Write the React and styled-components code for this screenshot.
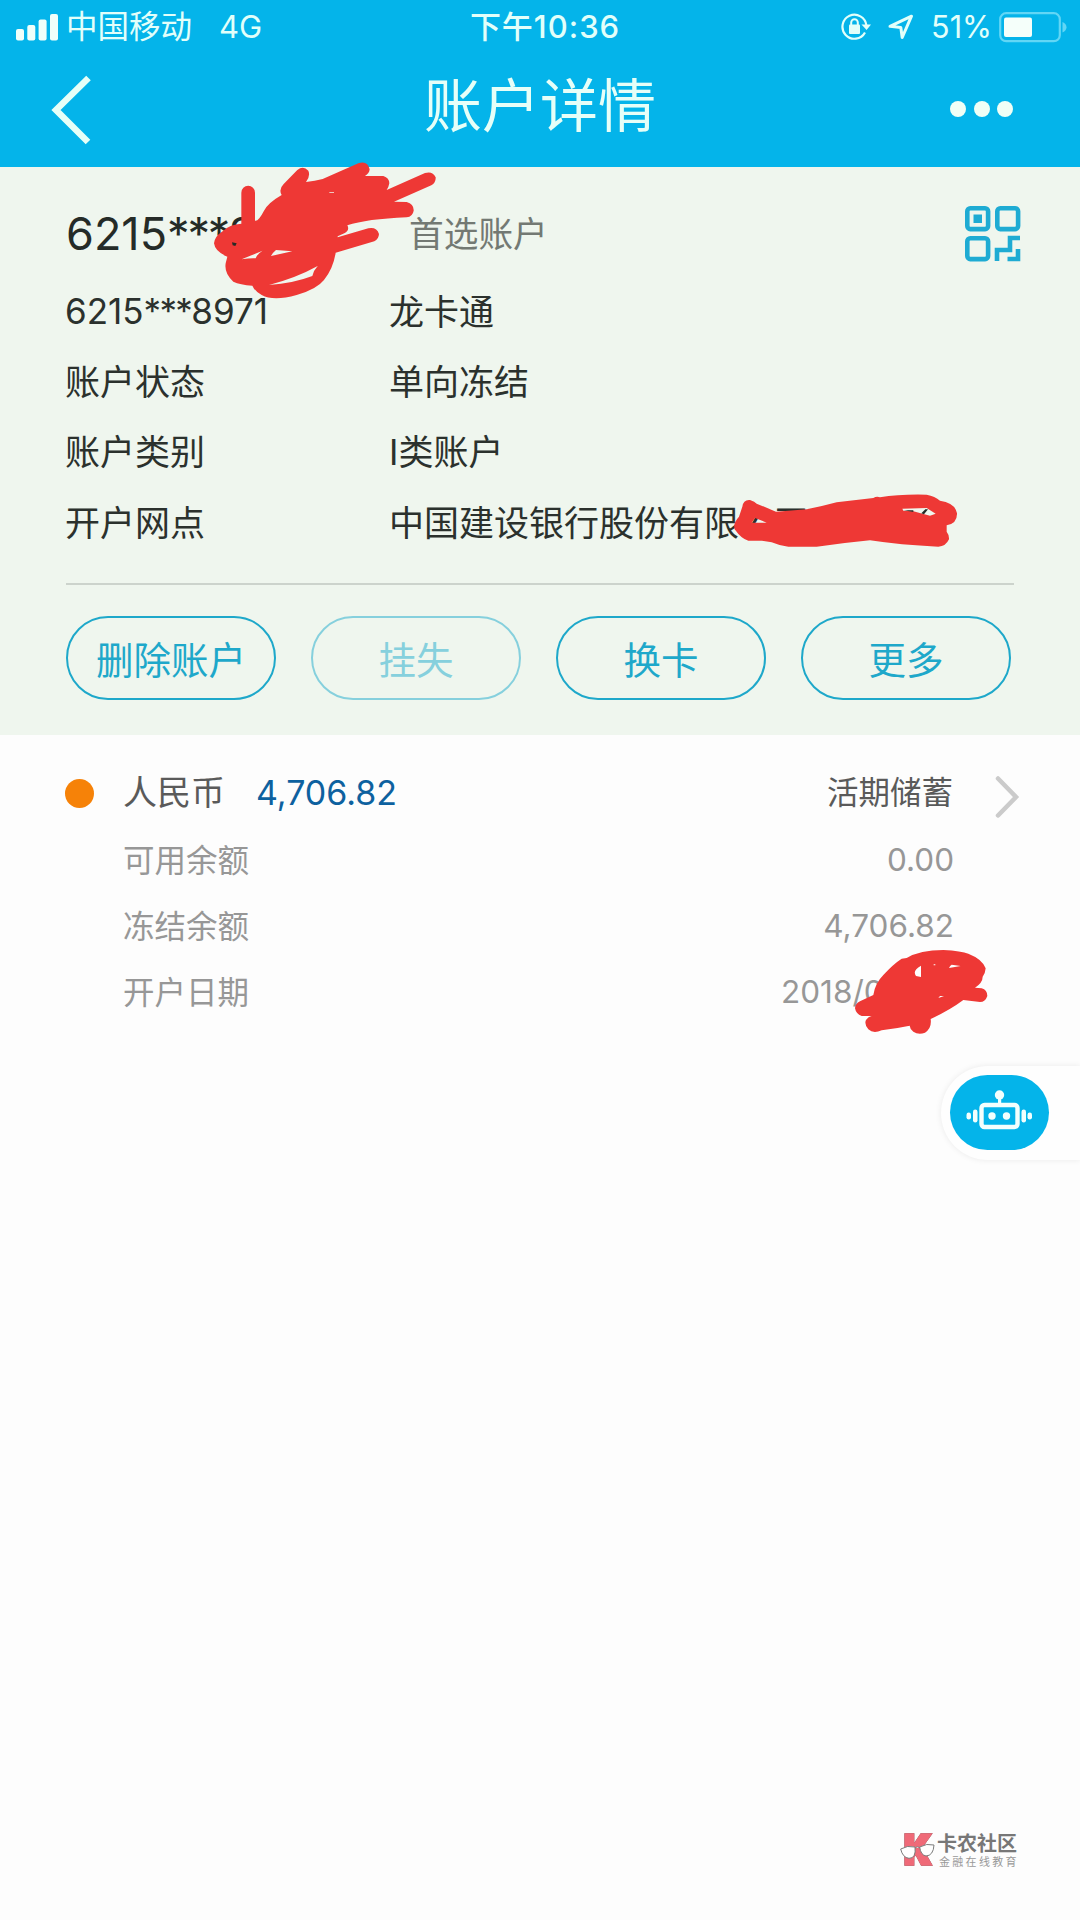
import React from 'react'
import styled, { createGlobalStyle } from 'styled-components'

const details = [
  { label: '6215***8971', value: '龙卡通', card: true },
  { label: '账户状态', value: '单向冻结' },
  { label: '账户类别', value: 'I类账户' },
  { label: '开户网点', value: '中国建设银行股份有限公司' },
]

const actions = [
  { text: '删除账户' },
  { text: '挂失', disabled: true },
  { text: '换卡' },
  { text: '更多' },
]

const balances = [
  { label: '可用余额', value: '0.00' },
  { label: '冻结余额', value: '4,706.82' },
  { label: '开户日期', value: '2018/0', date: true },
]

const SignalIcon = () => (
  <svg width='42' height='27' viewBox='0 0 42 27' fill='#f0fffa'>
    <rect x='0' y='15' width='8' height='11.5' rx='2' />
    <rect x='11.3' y='11' width='8' height='15.5' rx='2' />
    <rect x='22.6' y='5.5' width='8' height='21' rx='2' />
    <rect x='34' y='0' width='8' height='26.5' rx='2' />
  </svg>
)

const RotationLock = () => (
  <svg width='30' height='28' viewBox='0 0 30 28' fill='none' stroke='#e2fffa'>
    <path d='M25.4 12.5A12 12 0 1 0 24 19.5' strokeWidth='2.2' />
    <path d='M20.5 11.5H30L25.6 17Z' fill='#e2fffa' stroke='none' />
    <rect x='8' y='11.5' width='11' height='9.5' rx='1' fill='#e2fffa' stroke='none' />
    <path d='M10.2 12.5V9.5a3.3 3.3 0 0 1 6.6 0V12.5' strokeWidth='2' />
  </svg>
)

const LocationArrow = () => (
  <svg width='26' height='26' viewBox='0 0 26 26' fill='none'>
    <path
      d='M2 12.3L23.5 2.2L14.2 23.5L12.8 13.4Z'
      stroke='#e2fffa'
      strokeWidth='3'
      strokeLinejoin='round'
    />
  </svg>
)

const Battery = () => (
  <svg width='69' height='31' viewBox='0 0 69 31'>
    <rect x='1.2' y='1.2' width='59.6' height='28' rx='6' fill='none' stroke='#62d6f5' strokeWidth='2.2' />
    <rect x='5' y='5.5' width='28' height='19.5' rx='2' fill='#f5fffa' />
    <path d='M63.5 10Q67.5 12 67.5 15.3T63.5 20.5Z' fill='#62d6f5' />
  </svg>
)

const QrIcon = () => (
  <svg width='56' height='56' viewBox='0 0 56 56' fill='none' stroke='#1eabd3' strokeWidth='4.6'>
    <rect x='2.3' y='2.3' width='20.8' height='20.8' rx='3' />
    <rect x='32.3' y='2.3' width='20.8' height='20.8' rx='3' />
    <rect x='2.3' y='32.3' width='20.8' height='20.8' rx='3' />
    <rect x='8.5' y='8.5' width='8.5' height='8.5' fill='#1eabd3' stroke='none' />
    <path d='M55 32H45V44H32V55M53 43V53H42.5' />
  </svg>
)

const Robot = () => (
  <svg width='67' height='40' viewBox='0 0 67 40' fill='#f3fffd'>
    <circle cx='33.5' cy='5' r='4.7' />
    <rect x='32' y='8' width='3.2' height='8' />
    <rect x='15.5' y='15' width='36' height='22' rx='3' fill='none' stroke='#f3fffd' strokeWidth='4.4' />
    <circle cx='26' cy='26' r='3.7' />
    <circle cx='40.5' cy='26' r='3.7' />
    <rect x='7' y='19.5' width='4.5' height='13' rx='2.2' />
    <rect x='55.5' y='19.5' width='4.5' height='13' rx='2.2' />
    <rect x='0.5' y='22.5' width='4.5' height='7' rx='2.2' />
    <rect x='61.5' y='22.5' width='4.5' height='7' rx='2.2' />
  </svg>
)

const App = () => {
  return (
    <>
      <GlobalStyle />
      <Page>
        <Header>
          <StatusBar>
            <Carrier>
              <SignalIcon />
              <span>中国移动</span>
              <span className='network'>4G</span>
            </Carrier>
            <Time>下午10:36</Time>
            <StatusIcons>
              <RotationLock />
              <LocationArrow />
              <span>51%</span>
              <Battery />
            </StatusIcons>
          </StatusBar>
          <NavBar>
            <svg width='42' height='70' viewBox='0 0 42 70' fill='none'>
              <path d='M37.5 3L5 35L37 67' stroke='#e6fff8' strokeWidth='6.5' />
            </svg>
            <h1>账户详情</h1>
            <MoreDots>
              <i />
              <i />
              <i />
            </MoreDots>
          </NavBar>
        </Header>

        <Summary>
          <CardLine>
            <strong>
              6215<Mask>***</Mask>8
            </strong>
            <span>首选账户</span>
            <QrIcon />
          </CardLine>
          <Details>
            {details.map(({ label, value, card }) => (
              <DetailRow key={label} $card={card}>
                <dt>
                  {card ? (
                    <>
                      6215<Mask>***</Mask>8971
                    </>
                  ) : (
                    label
                  )}
                </dt>
                <dd>{value}</dd>
              </DetailRow>
            ))}
          </Details>
          <Actions>
            {actions.map(({ text, disabled }) => (
              <ActionButton key={text} $muted={disabled}>
                {text}
              </ActionButton>
            ))}
          </Actions>
        </Summary>

        <Account>
          <AccountHead>
            <i />
            <span>人民币</span>
            <strong>4,706.82</strong>
            <em>活期储蓄</em>
            <svg width='26' height='44' viewBox='0 0 26 44' fill='none'>
              <path d='M4 3.5L22 22L4 40.5' stroke='#cbcbcb' strokeWidth='4.5' strokeLinecap='round' />
            </svg>
          </AccountHead>
          {balances.map(({ label, value, date }) => (
            <BalanceRow key={label} $date={date}>
              <span>{label}</span>
              <span className='value'>{value}</span>
            </BalanceRow>
          ))}
        </Account>

        <Helper>
          <HelperButton>
            <Robot />
          </HelperButton>
        </Helper>

        <Scribble $x={40} $y={150} width='520' height='260' viewBox='0 0 1560 780'>
          <path d='M604 128A20.5 20.5 0 0 1 645 128V212Q655 215 672 182Q685 158 725 135Q715 118 731 102L772 60Q790 46 805 62Q812 78 798 96Q825 93 848 87L955 40Q983 31 989 58Q988 70 975 78H1030Q1048 84 1048 100Q1046 112 1040 120L1155 69Q1178 62 1187 82Q1188 98 1174 106L1062 155L1100 156Q1122 162 1121 182Q1118 200 1100 202Q980 207 922 226Q930 240 913 250L893 259V262L985 235Q1010 230 1017 252Q1016 268 1003 274L887 308Q880 355 852 390Q830 418 770 435Q700 455 665 435Q645 425 637 407Q600 404 580 395Q552 370 557 340L562 320Q525 305 522 280Q524 258 550 242Q570 223 604 221ZM605 328Q630 324 647 325Q652 311 668 302ZM693 318Q698 308 708 300L757 304ZM687 405Q760 400 817 378Q820 362 833 348Q770 383 687 405ZM868 127H882V129H868Z' />
          <path className='ink' d='M576 277L590 280L586 288L578 286Z' />
        </Scribble>
        <Scribble $x={700} $y={470} width='300' height='110' viewBox='0 0 900 330'>
          <path d='M127 110Q130 88 150 90Q165 95 170 101L228 125L320 118Q370 108 410 97L520 84Q530 78 540 82Q600 72 680 74Q705 78 720 92Q765 98 771 130Q772 160 740 166L740 185Q748 195 747 208Q737 230 715 230Q600 225 510 211Q430 219 350 230H265Q240 228 215 217L185 212H145Q125 208 104 178Q98 160 117 140ZM165 144L200 158H155ZM607 116L680 114L707 131L690 137L640 124L610 122Z' />
          <path className='ink' d='M676 118H684L672 133L664 130ZM612 121H640V126Z' />
        </Scribble>
        <Scribble $x={760} $y={840} width='320' height='330' viewBox='0 0 960 990'>
          <path d='M285 505Q286 490 300 484L340 465Q345 430 370 405Q400 372 425 356L440 354Q480 330 550 330Q605 333 625 341Q668 358 677 385Q676 400 668 410Q668 428 645 443L665 445Q682 450 682 468Q676 486 660 486L610 480Q570 510 512 537Q516 565 495 578Q475 585 460 575Q450 568 449 557Q405 566 365 571Q340 582 325 568Q312 552 318 540Q325 530 335 528H305Q288 522 285 505ZM483 377V411L468 408Q456 392 483 377ZM567 384Q570 376 575 374L602 378ZM535 474L540 468H552ZM521 373H526V376H521Z' />
        </Scribble>

        <Watermark>
          <svg width='36' height='38' viewBox='0 0 108 114'>
            <text x='13' y='100' textLength='80' lengthAdjust='spacingAndGlyphs'>K</text>
            <path d='M2 54Q22 42 45 48Q49 82 27 82Q8 80 2 54ZM59 48Q80 36 102 42Q100 74 78 75Q62 72 59 48ZM45 51Q52 44 59 50' />
          </svg>
          <div>
            <b>卡农社区</b>
            <small>金融在线教育</small>
          </div>
        </Watermark>
      </Page>
    </>
  )
}

const GlobalStyle = createGlobalStyle`
  * {
    box-sizing: border-box;
    margin: 0;
    padding: 0;
  }
  body {
    background: #fdfdfd;
    font-family: Inter, 'Noto Sans CJK SC', sans-serif;
  }
  svg {
    display: block;
    flex: none;
  }
`

const Page = styled.main`
  position: relative;
  width: 1080px;
  height: 1920px;
  overflow: hidden;
  background: #fdfdfd;
`

const Header = styled.header`
  height: 167px;
  background: #04b4ea;
  color: #e6fff8;
`

const StatusBar = styled.div`
  display: grid;
  grid-template-columns: 1fr auto 1fr;
  height: 54px;
  padding: 0 12px 0 16px;
  align-items: center;
  font-size: 31px;
  line-height: 54px;
  color: #e2fffa;
`

const Carrier = styled.div`
  display: flex;
  align-items: center;
  gap: 8px;
  font-size: 31.5px;
  .network {
    margin-left: 19px;
    font-size: 31px;
  }
`

const Time = styled.div`
  padding-left: 6px;
  font-size: 31px;
  font-weight: 500;
  letter-spacing: 1px;
`

const StatusIcons = styled.div`
  display: flex;
  align-items: center;
  justify-content: flex-end;
  span {
    margin: 0 7px 0 17px;
    font-size: 30.5px;
  }
  svg + svg {
    margin-left: 17px;
  }
`

const NavBar = styled.nav`
  display: grid;
  grid-template-columns: 1fr auto 1fr;
  align-items: center;
  height: 111px;
  padding: 0 67px 0 51px;
  h1 {
    padding: 0 0 7px 16px;
    font-size: 58px;
    font-weight: 400;
    line-height: 103px;
  }
`

const MoreDots = styled.div`
  display: flex;
  justify-self: end;
  gap: 7.5px;
  padding-bottom: 2px;
  i {
    width: 16px;
    height: 16px;
    border-radius: 50%;
    background: #f0fff6;
  }
`

const Summary = styled.section`
  height: 568px;
  padding: 38px 66px 0;
  background: #eff6ee;
`

const Mask = styled.span`
  letter-spacing: -0.047em;
`

const CardLine = styled.div`
  display: flex;
  align-items: center;
  height: 58px;
  color: #252b27;
  strong {
    width: 343px;
    padding-bottom: 1px;
    font-size: 45px;
    font-weight: 400;
  }
  > span {
    padding-bottom: 4px;
    font-size: 34.7px;
    color: #737973;
  }
  svg {
    margin-left: auto;
    margin-right: -7px;
  }
`

const Details = styled.dl`
  padding: 13px 0 25px;
  border-bottom: 2px solid #ccd3cc;
`

const DetailRow = styled.div`
  display: flex;
  height: 70.4px;
  align-items: center;
  margin-left: -1px;
  font-size: 35px;
  color: #2b312d;
  white-space: nowrap;
  dt {
    width: 324px;
    padding-bottom: ${({ $card }) => ($card ? 0 : '4px')};
  }
  dd {
    padding-bottom: 4px;
  }
`

const Actions = styled.div`
  display: flex;
  gap: 35px;
  margin-top: 31px;
`

const ActionButton = styled.button`
  width: 210px;
  height: 84px;
  border: 2.5px solid;
  border-radius: 42px;
  background: none;
  font: 400 37.5px Inter, 'Noto Sans CJK SC', sans-serif;
  color: ${({ $muted }) => ($muted ? '#86d0dd' : '#1ea8ca')};
`

const Account = styled.section`
  padding: 24px 126px 0 123px;
`

const AccountHead = styled.div`
  display: flex;
  align-items: center;
  height: 66px;
  margin: 0 -66px 0 -58px;
  font-size: 34px;
  color: #5a5a5a;
  i {
    width: 29px;
    height: 29px;
    margin: 2px 29px 0 0;
    border-radius: 50%;
    background: #f68208;
  }
  span {
    padding-bottom: 3px;
  }
  strong {
    margin-left: 31px;
    font-weight: 400;
    color: #0d619f;
  }
  em {
    margin-left: auto;
    padding-bottom: 4px;
    font-size: 31.5px;
    font-style: normal;
  }
  svg {
    margin: 9px 0 0 41px;
  }
`

const BalanceRow = styled.div`
  display: flex;
  align-items: center;
  justify-content: space-between;
  height: 66px;
  font-size: 31.5px;
  color: #979797;
  span {
    padding-bottom: 1px;
  }
  .value {
    width: ${({ $date }) => ($date ? '173px' : 'auto')};
    padding: 2px 0 0;
  }
`

const Helper = styled.aside`
  position: absolute;
  top: 1066px;
  right: 0;
  width: 139px;
  height: 94px;
  padding: 9px 0 0 9px;
  border-radius: 47px 0 0 47px;
  background: #fefefe;
  box-shadow: 0 0 6px rgba(0, 0, 0, 0.08);
`

const HelperButton = styled.div`
  display: grid;
  place-items: center;
  width: 99px;
  height: 75px;
  padding-bottom: 5px;
  border-radius: 38px;
  background: #04b4ea;
`

const Scribble = styled.svg`
  position: absolute;
  left: ${({ $x }) => $x}px;
  top: ${({ $y }) => $y}px;
  fill: #ee3835;
  fill-rule: evenodd;
  .ink {
    fill: #252b27;
  }
`

const Watermark = styled.footer`
  position: absolute;
  left: 900px;
  top: 1831px;
  display: flex;
  gap: 1px;
  color: #777;
  svg {
    overflow: visible;
  }
  text {
    font: 900 118px Inter, sans-serif;
    fill: #ef6a78;
    stroke: #ef6a78;
    stroke-width: 10px;
    filter: drop-shadow(0 0 2px #555);
  }
  path {
    fill: #fff;
    stroke: #7b7b7b;
    stroke-width: 3px;
  }
  b,
  small {
    display: block;
    white-space: nowrap;
  }
  b {
    font-size: 20px;
    font-weight: 700;
    line-height: 27px;
  }
  small {
    padding-left: 2px;
    font-size: 11px;
    letter-spacing: 2.3px;
    line-height: 9px;
    color: #999;
  }
`

export default App
